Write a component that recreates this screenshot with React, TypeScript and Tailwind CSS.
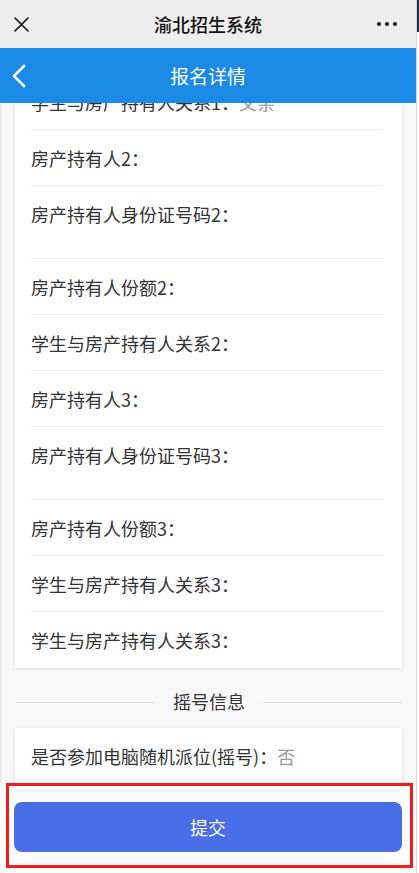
export default function App() {
  const rows: { label: string; tall?: boolean }[] = [
    { label: "房产持有人2：" },
    { label: "房产持有人身份证号码2：", tall: true },
    { label: "房产持有人份额2：" },
    { label: "学生与房产持有人关系2：" },
    { label: "房产持有人3：" },
    { label: "房产持有人身份证号码3：", tall: true },
    { label: "房产持有人份额3：" },
    { label: "学生与房产持有人关系3：" },
    { label: "学生与房产持有人关系3：" },
  ];
  return (
    <div className="relative flex h-[873px] w-[419px] overflow-hidden bg-white font-['Noto_Sans_CJK_SC','Noto_Sans',sans-serif]">
      <div className="flex w-[416px] shrink-0 flex-col">
        {/* top bar */}
        <div className="flex h-[48px] shrink-0 items-center bg-[#ededed]">
          <div className="flex w-[60px] items-center pl-[14px]">
            <svg width="15" height="15" viewBox="0 0 15 15" fill="none" stroke="#111" strokeWidth="1.6" strokeLinecap="round">
              <path d="M1 1 L14 14 M14 1 L1 14" />
            </svg>
          </div>
          <div className="flex-1 text-center text-[18px] font-medium leading-[24px] text-[#111]">渝北招生系统</div>
          <div className="flex w-[60px] items-center justify-end gap-[4px] pr-[19px]">
            <span className="h-[4px] w-[4px] rounded-full bg-[#111]" />
            <span className="h-[4px] w-[4px] rounded-full bg-[#111]" />
            <span className="h-[4px] w-[4px] rounded-full bg-[#111]" />
          </div>
        </div>
        {/* blue header */}
        <div className="flex h-[55px] shrink-0 items-center bg-[#1a8ae5]">
          <div className="flex w-[60px] items-center pl-[12px]">
            <svg width="14" height="24" viewBox="0 0 14 24" fill="none" stroke="#fff" strokeWidth="2.6" strokeLinecap="round" strokeLinejoin="round">
              <path d="M12 2 L2 12 L12 22" />
            </svg>
          </div>
          <div className="flex-1 text-center text-[19px] leading-[26px] text-white">报名详情</div>
          <div className="w-[60px]" />
        </div>
        {/* content */}
        <div className="flex min-h-0 flex-1 flex-col overflow-hidden border-l-2 border-[#e9e9e9] bg-[#f8f8f8]">
          <div className="z-0 -mt-[29px] ml-[13px] mr-[14px] shrink-0 bg-white pl-[16px] pr-[19px] shadow-[0_1px_4px_rgba(0,0,0,0.12)]">
            <div className="flex h-[56px] items-center border-b border-[#ececec] text-[18px] leading-[24px] text-[#333]">
              学生与房产持有人关系1：<span className="text-[#999]">父亲</span>
            </div>
            {rows.map((r, i) => (
              <div
                key={i}
                className={
                  r.tall
                    ? "h-[73px] border-b border-[#ececec] pt-[16px] text-[18px] leading-[24px] text-[#333]"
                    : i === rows.length - 1
                    ? "flex h-[56px] items-center text-[18px] leading-[24px] text-[#333]"
                    : "flex h-[56px] items-center border-b border-[#ececec] text-[18px] leading-[24px] text-[#333]"
                }
              >
                {r.label}
              </div>
            ))}
          </div>
          {/* section title */}
          <div className="flex h-[60px] shrink-0 items-start gap-[18px] px-[14px] pt-[20px]">
            <div className="mt-[14px] h-px flex-1 bg-[#dedede]" />
            <div className="text-[18px] leading-[26px] text-[#333]">摇号信息</div>
            <div className="mt-[14px] h-px flex-1 bg-[#dedede]" />
          </div>
          <div className="ml-[13px] mr-[14px] shrink-0 bg-white pl-[16px] pr-[19px] shadow-[0_1px_4px_rgba(0,0,0,0.12)]">
            <div className="flex h-[56px] items-center border-b border-[#ececec] text-[18px] leading-[24px] text-[#333]">
              是否参加电脑随机派位(摇号)：<span className="text-[#999]">否</span>
            </div>
            <div className="h-[56px]" />
          </div>
        </div>
        {/* footer */}
        <div className="flex h-[90px] shrink-0 flex-col bg-[#fcfcfc] pt-[19px]">
          <button className="ml-[14px] mr-[14px] flex h-[50px] items-center justify-center rounded-[8px] bg-[#4a6ee8] text-[18px] text-white">
            提交
          </button>
        </div>
      </div>
      {/* right side strip */}
      <div className="flex w-[3px] shrink-0 flex-col border-l border-[#d6d6d6] bg-white">
        <div className="h-[32px] bg-[#1e2d4a]" />
      </div>
      {/* annotation box */}
      <div className="pointer-events-none absolute left-[6px] top-[783px] h-[85px] w-[407px] border-[3px] border-[#f21a1a]" />
    </div>
  );
}
